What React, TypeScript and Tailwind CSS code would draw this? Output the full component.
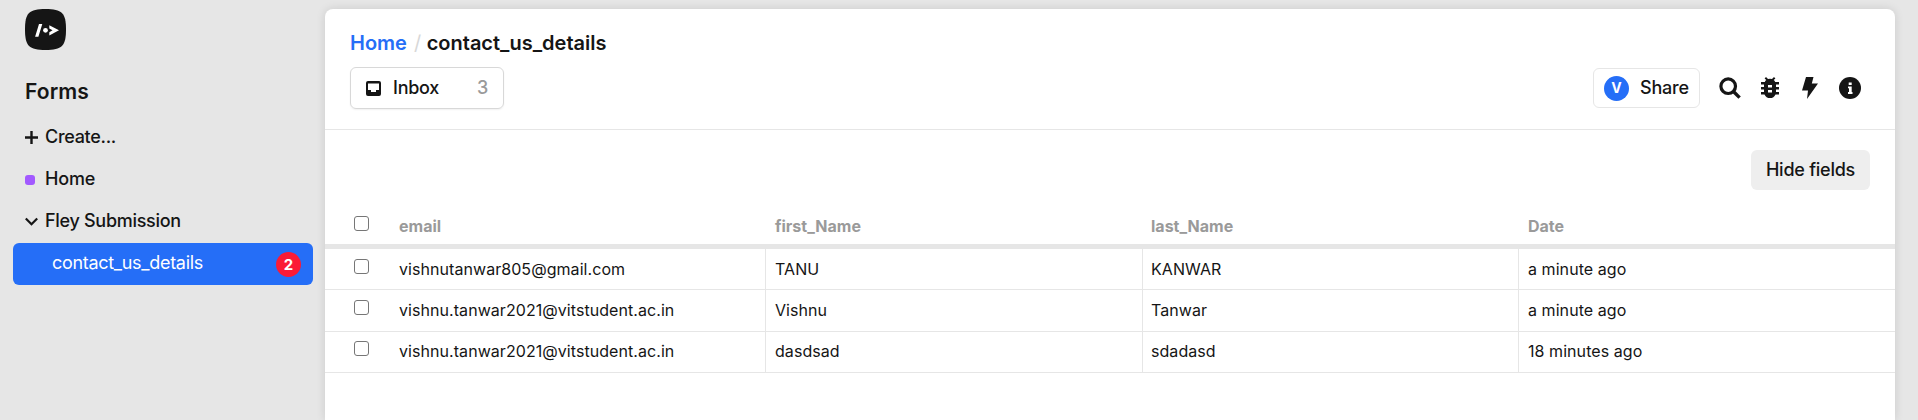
import React from "react";

const rows = [
  ["vishnutanwar805@gmail.com", "TANU", "KANWAR", "a minute ago"],
  ["vishnu.tanwar2021@vitstudent.ac.in", "Vishnu", "Tanwar", "a minute ago"],
  ["vishnu.tanwar2021@vitstudent.ac.in", "dasdsad", "sdadasd", "18 minutes ago"],
];
const rowStyles = [
  { row: "h-[41px] leading-[40px]", check: "pt-[10px]" },
  { row: "h-[42px] leading-[40px]", check: "pt-[10px]" },
  { row: "h-[41px] leading-[38px]", check: "pt-[9px]" },
];

function Logo() {
  return (
    <svg className="block size-[41px]" viewBox="0 0 41 41">
      <path d="M0 20.5C0 4 4 0 20.5 0S41 4 41 20.5 37 41 20.5 41 0 37 0 20.5Z" fill="#151515" />
      <path d="M14 15h3.300l-3.900 12.700H10.100ZM24.300 16.300 34 21.300l-9.700 5.200v-3.300l3.200-1.900-3.200-1.800Z" fill="#fff" />
      <circle cx="20.500" cy="21.300" r="2.400" fill="#fff" />
    </svg>
  );
}

function Check() {
  return <span className="block size-[15px] shrink-0 rounded-[3px] border border-[#767676] bg-white" />;
}

function Sidebar() {
  return (
    <aside className="flex w-[325px] shrink-0 flex-col pt-[9px] text-[18px] font-medium leading-[42px] tracking-[-0.3px]">
      <div className="pl-[25px]"><Logo /></div>
      <h2 className="mt-[22px] pl-[25px] text-[21px] font-semibold leading-[40px] tracking-[0.1px]">Forms</h2>
      <div className="mt-[4px] flex h-[42px] items-center pl-[25px]">
        <svg className="mr-[7px] size-[13px]" viewBox="0 0 13 13"><path d="M6.500 0v13M0 6.500h13" stroke="#151515" strokeWidth="2.400" /></svg>
        <span>Create...</span>
      </div>
      <div className="flex h-[42px] items-center pl-[25px]">
        <span className="mr-[10px] mt-[2px] size-[10px] rounded-[3px] bg-[#a259ff]" />
        <span className="tracking-[-0.2px]">Home</span>
      </div>
      <div className="flex h-[42px] items-center pl-[25px]">
        <svg className="mr-[7px] size-[13px]" viewBox="0 0 13 13"><path d="m.8 3.500 5.700 5.700 5.700-5.700" fill="none" stroke="#151515" strokeWidth="2.200" /></svg>
        <span>Fley Submission</span>
      </div>
      <div className="ml-[13px] mr-[12px] mt-px flex h-[42px] items-center rounded-[6px] bg-[#256ef7] pl-[39px] pr-[12px] font-normal text-white">
        <span className="-mt-[3px] flex-1">contact_us_details</span>
        <span className="flex size-[25px] items-center justify-center rounded-full bg-[#fb1a36] text-[15px] font-bold leading-none tracking-normal">2</span>
      </div>
    </aside>
  );
}

function Toolbar() {
  return (
    <div className="flex h-[42px] items-center">
      <button className="flex h-[42px] w-[154px] items-center rounded-[6px] border border-[#d8d8d8] px-[15px] pb-px text-[18px] font-medium tracking-[-0.25px] shadow-[0_1px_2px_rgba(0,0,0,0.06)]">
        <svg className="mr-[12px] mt-px size-[15px]" viewBox="0 0 15 15">
          <path fillRule="evenodd" d="M2 0h11a2 2 0 0 1 2 2v11a2 2 0 0 1-2 2H2a2 2 0 0 1-2-2V2a2 2 0 0 1 2-2ZM2 2.500V9h3v2h5V9h3V2.500Z" fill="#151515" />
        </svg>
        <span className="flex-1 text-left">Inbox</span>
        <span className="text-[#9a9a9a]">3</span>
      </button>
      <div className="ml-auto flex items-center pr-[34px]">
        <button className="flex h-[40px] w-[107px] items-center rounded-[6px] border border-[#e6e6e6] pl-[10px] text-[18px] font-medium tracking-[-0.2px]">
          <span className="mr-[11px] flex size-[25px] items-center justify-center rounded-full bg-[#256ef7] text-[14px] font-bold leading-none text-white">V</span>
          <span className="-mt-px">Share</span>
        </button>
        <svg className="ml-[19px] h-[22px] w-[22px]" viewBox="0 0 22 22"><circle cx="9.200" cy="9.200" r="7.300" fill="none" stroke="#151515" strokeWidth="3.200" /><path d="m14.200 14.200 6.400 6.400" stroke="#151515" strokeWidth="3.400" /></svg>
        <svg className="ml-[20px] h-[22px] w-[18px]" viewBox="0 0 18 22" fill="#151515">
          <path fillRule="evenodd" d="M5 0 7 2a6 6 0 0 1 4 0l2-2 1.400 1.400L12.700 3.100A6 6 0 0 1 14.200 5H18v2.500h-3V10h3v2.500h-3V15h3v2.500h-3.500a6 6 0 0 1-11 0H0V15h3v-2.500H0V10h3V7.500H0V5h3.800A6 6 0 0 1 5.300 3.100L3.600 1.400ZM7 8v2.500h4V8ZM7 13v2.500h4V13Z" />
        </svg>
        <svg className="ml-[23px] h-[22px] w-[16px]" viewBox="0 0 16 22"><path d="M4 0h7.500L9.800 6.500H16L5 22l1-8.500H0Z" fill="#151515" /></svg>
        <svg className="ml-[21px] size-[22px]" viewBox="0 0 22 22"><circle cx="11" cy="11" r="11" fill="#151515" /><path d="M9.700 5.500h3V8h-3ZM9 9.500h3.700V15H13.500v2H9v-2h1v-3.700H9Z" fill="#fff" /></svg>
      </div>
    </div>
  );
}

const grid = "grid grid-cols-[440px_377px_376px_1fr]";

export default function App() {
  return (
    <div className="flex h-[420px] w-[1918px] overflow-hidden bg-[#e6e6e6] font-['Inter',sans-serif] text-[#151515]">
      <Sidebar />
      <main className="mr-[23px] mt-[9px] flex-1 rounded-t-[8px] bg-white shadow-[0_0_10px_rgba(0,0,0,0.12)]">
        <header className="h-[121px] border-b border-[#e6e6e6] pl-[25px] pt-[18px]">
          <div className="flex h-[32px] items-center text-[20px] font-semibold">
            <span className="text-[#256ef7]">Home</span>
            <span className="ml-[7px] mr-[6px] font-normal tracking-[-0.5px] text-[#d8d8d8]">/</span>
            <span>contact_us_details</span>
          </div>
          <div className="mt-[8px]"><Toolbar /></div>
        </header>
        <div className="flex justify-end pr-[25px] pt-[20px]">
          <button className="h-[40px] w-[119px] rounded-[6px] bg-[#eeeeee] pb-px text-[18px] font-medium tracking-[-0.25px]">Hide fields</button>
        </div>
        <div className={grid + " mt-[5px] h-[54px] border-b-[5px] border-[#e6e6e6] text-[16px] font-bold leading-[62px] text-[#9a9a9a]"}>
          <div className="flex pl-[29px]"><div className="pt-[21px]"><Check /></div><span className="ml-[30px]">email</span></div>
          <div className="pl-[10px]">first_Name</div>
          <div className="pl-[9px]">last_Name</div>
          <div className="pl-[10px]">Date</div>
        </div>
        {rows.map((r, i) => (
          <div key={i} className={grid + " border-b border-[#e6e6e6] text-[16px] tracking-[0.06px] " + rowStyles[i].row}>
            <div className="flex pl-[29px]"><div className={rowStyles[i].check}><Check /></div><span className="ml-[30px]">{r[0]}</span></div>
            <div className="border-l border-[#e6e6e6] pl-[9px]">{r[1]}</div>
            <div className="border-l border-[#e6e6e6] pl-[8px]">{r[2]}</div>
            <div className="border-l border-[#e6e6e6] pl-[9px]">{r[3]}</div>
          </div>
        ))}
      </main>
    </div>
  );
}
